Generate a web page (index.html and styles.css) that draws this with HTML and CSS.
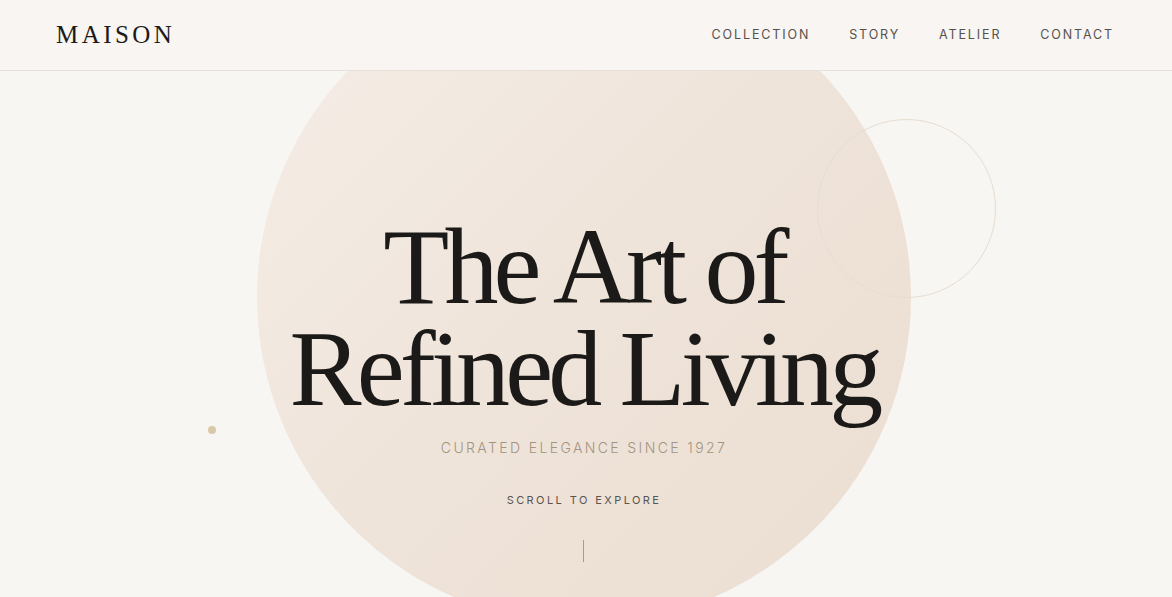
FILE: index.html
```html
<!DOCTYPE html>
<html lang="en">
<head>
<meta charset="utf-8">
<title>Maison</title>
<link rel="stylesheet" href="styles.css">
</head>
<body>
<div class="page">
  <div class="orb"></div>
  <div class="ring"></div>
  <div class="dot"></div>
  <header class="header">
    <div class="logo">MAISON</div>
    <nav class="nav">
      <a href="#">COLLECTION</a>
      <a href="#">STORY</a>
      <a href="#">ATELIER</a>
      <a href="#">CONTACT</a>
    </nav>
  </header>
  <main class="hero">
    <h1 class="title">The Art of<br>Refined Living</h1>
    <p class="subtitle">CURATED ELEGANCE SINCE 1927</p>
    <p class="scroll">SCROLL TO EXPLORE</p>
    <div class="scroll-line"></div>
  </main>
</div>
</body>
</html>
```
FILE: styles.css
```css
* { box-sizing: border-box; }
html, body { margin: 0; padding: 0; }
body {
  background: #f8f6f3;
  font-family: Inter, "Liberation Sans", sans-serif;
  overflow: hidden;
}
.page {
  position: relative;
  width: 1172px;
  height: 597px;
  overflow: hidden;
}
.orb {
  position: absolute;
  left: 257px;
  top: -30px;
  width: 654px;
  height: 654px;
  border-radius: 50%;
  background: linear-gradient(135deg, #f5eee7 0%, #efe4da 50%, #ebddd1 100%);
}
.ring {
  position: absolute;
  left: 817px;
  top: 119px;
  width: 179px;
  height: 179px;
  border-radius: 50%;
  border: 1px solid #e7ddd0;
}
.dot {
  position: absolute;
  left: 208px;
  top: 426px;
  width: 8px;
  height: 8px;
  border-radius: 50%;
  background: #d8c9a8;
}
.header {
  position: relative;
  z-index: 2;
  height: 71px;
  display: flex;
  align-items: center;
  justify-content: space-between;
  padding: 0 58px 1px 56px;
  background: #f8f5f2;
  border-bottom: 1px solid #e6e0db;
}
.logo {
  font-family: "Liberation Serif", serif;
  font-size: 25px;
  letter-spacing: 0.138em;
  color: #1c1a18;
  margin-top: 1px;
}
.nav {
  display: flex;
  gap: 39px;
}
.nav a {
  font-size: 12.5px;
  letter-spacing: 0.15em;
  color: #55514c;
  text-decoration: none;
}
.hero {
  position: relative;
  z-index: 1;
  display: flex;
  flex-direction: column;
  align-items: center;
  padding: 145px 4px 0 0;
}
.title {
  margin: 0;
  font-family: "Liberation Serif", serif;
  font-weight: 400;
  font-size: 108px;
  line-height: 102px;
  letter-spacing: -0.045em;
  text-align: center;
  color: #1c1a18;
}
.subtitle {
  margin: 18px 0 0;
  font-size: 14px;
  line-height: 20px;
  letter-spacing: 0.17em;
  color: #a39480;
  font-weight: 300;
}
.scroll {
  margin: 34px 0 0;
  font-size: 11px;
  line-height: 16px;
  letter-spacing: 0.22em;
  color: #58544f;
}
.scroll-line {
  margin: 32px 0 0 -2px;
  width: 1px;
  height: 22px;
  background: #b59a6b;
}
```
